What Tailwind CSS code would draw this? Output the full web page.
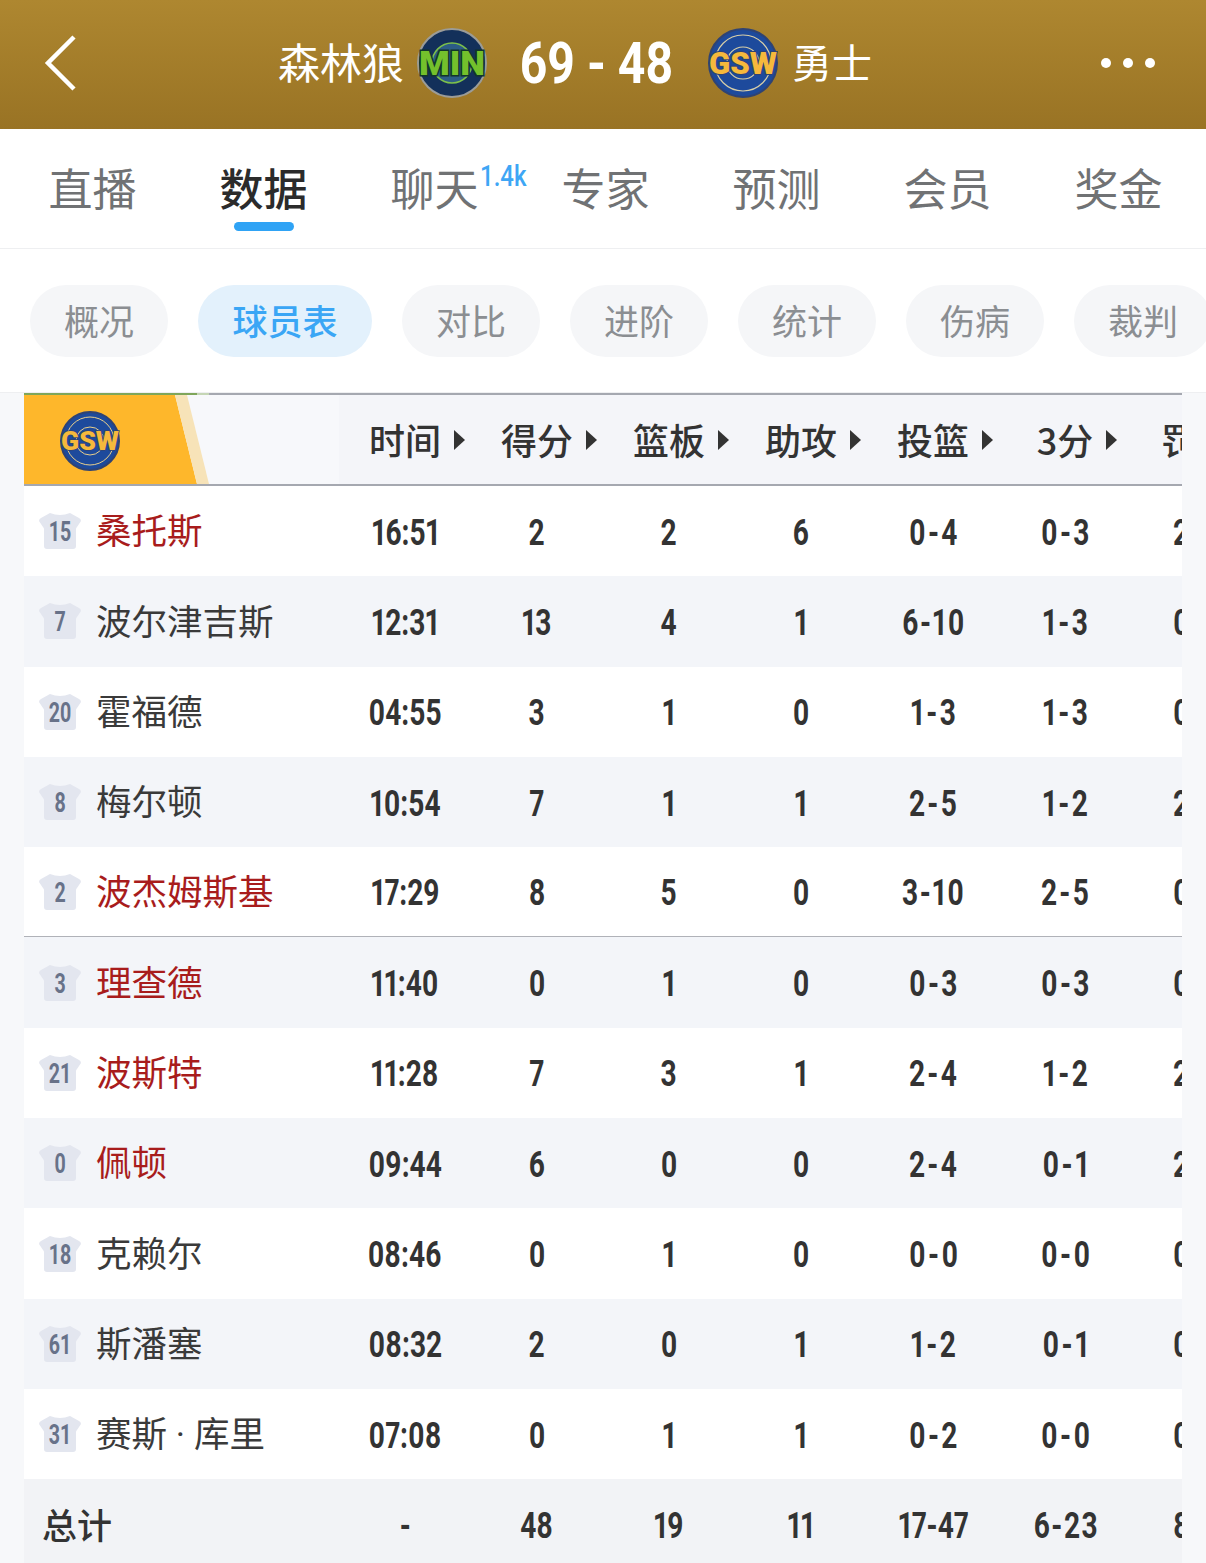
<!doctype html>
<html lang="zh-CN">
<head>
  <meta charset="UTF-8" />
  <meta name="viewport" content="width=device-width, initial-scale=1.0" />
  <title>森林狼 69 - 48 勇士</title>
  <script src="https://cdn.jsdelivr.net/npm/@tailwindcss/browser@4"></script>
</head>
<body class="w-[1206px] h-[1563px] overflow-hidden bg-[#f7f8fa] font-[family-name:'Noto_Sans_CJK_SC',sans-serif]">

  <!-- Score bar -->
  <header class="h-[129px] pb-[3px] flex items-center bg-gradient-to-b from-[#ae8730] to-[#997324] text-white">
    <svg class="ml-[44px] w-[32px] h-[56px]" viewBox="0 0 32 56" fill="none" stroke="#fff" stroke-width="4.5"><path d="M30 2 L4 28 L30 54" /></svg>
    <span class="ml-[202px] w-[124px] pb-[4px] text-[42px] leading-none whitespace-nowrap">森林狼</span>
    <svg class="ml-[15px] w-[70px] h-[70px] shrink-0" viewBox="0 0 70 70">
      <circle cx="35" cy="35" r="34" fill="#13305a" stroke="#9b9c98" stroke-width="2" />
      <circle cx="35" cy="35" r="20" fill="#2c5c86" stroke="#7cc04a" stroke-width="1.5" />
      <text x="35" y="47" text-anchor="middle" font-family="Roboto" font-weight="900" font-size="34" textLength="66" lengthAdjust="spacingAndGlyphs" fill="#74c02c" stroke="#12352c" stroke-width="3" class="[paint-order:stroke]">MIN</text>
    </svg>
    <div class="ml-[34px] w-[151px] flex justify-center">
      <span class="inline-block scale-x-[.83] whitespace-nowrap font-[family-name:Roboto,sans-serif] font-bold text-[58px] leading-none">69 - 48</span>
    </div>
    <svg class="ml-[36px] w-[70px] h-[70px] shrink-0" viewBox="0 0 70 70">
      <circle cx="35" cy="35" r="34" fill="#1d4a9c" stroke="#2f4373" stroke-width="2" />
      <circle cx="35" cy="35" r="28" fill="none" stroke="#d8cfa8" stroke-width="1.2" />
      <circle cx="35" cy="35" r="16" fill="none" stroke="#d8cfa8" stroke-width="1.2" />
      <text x="35" y="46" text-anchor="middle" font-family="Roboto" font-weight="900" font-size="31" textLength="68" lengthAdjust="spacingAndGlyphs" fill="#f5b93c" stroke="#2f4373" stroke-width="2" class="[paint-order:stroke]">GSW</text>
    </svg>
    <span class="ml-[14px] w-[81px] pb-[4px] text-[40px] leading-none whitespace-nowrap">勇士</span>
    <div class="ml-[228px] flex gap-[12px]">
      <span class="w-[10px] h-[10px] rounded-full bg-white"></span>
      <span class="w-[10px] h-[10px] rounded-full bg-white"></span>
      <span class="w-[10px] h-[10px] rounded-full bg-white"></span>
    </div>
  </header>

  <!-- Main tabs -->
  <nav class="h-[120px] pl-[7px] flex bg-white border-b border-[#eeeff1] text-[44px] text-[#707274]">
    <a class="w-[171px] pt-[26px] leading-[64px] text-center">直播</a>
    <a class="relative w-[171px] pt-[26px] leading-[64px] text-center font-medium text-[#2b2b2b]">数据<span class="absolute left-[56px] top-[93px] w-[60px] h-[9px] rounded-full bg-[#2fa3f5]"></span></a>
    <a class="relative w-[171px] pt-[26px] leading-[64px] text-center">聊天<span class="absolute left-[131px] top-[32px] text-[30px] leading-none text-[#3ea6f5] font-[family-name:Roboto,sans-serif] font-medium scale-x-[.8] origin-left whitespace-nowrap">1.4k</span></a>
    <a class="w-[171px] pt-[26px] leading-[64px] text-center">专家</a>
    <a class="w-[171px] pt-[26px] leading-[64px] text-center">预测</a>
    <a class="w-[171px] pt-[26px] leading-[64px] text-center">会员</a>
    <a class="w-[171px] pt-[26px] leading-[64px] text-center">奖金</a>
  </nav>

  <!-- Sub tabs -->
  <div class="h-[144px] pt-[36px] pl-[30px] flex gap-[30px] overflow-hidden bg-white border-b border-[#eeeff1] text-[35px] text-[#8b8e92]">
    <a class="w-[138px] h-[72px] shrink-0 rounded-full bg-[#f5f6f8] leading-[70px] text-center">概况</a>
    <a class="w-[174px] h-[72px] shrink-0 rounded-full bg-[#e3f1fc] leading-[70px] text-center font-medium text-[#3aa6f5]">球员表</a>
    <a class="w-[138px] h-[72px] shrink-0 rounded-full bg-[#f5f6f8] leading-[70px] text-center">对比</a>
    <a class="w-[138px] h-[72px] shrink-0 rounded-full bg-[#f5f6f8] leading-[70px] text-center">进阶</a>
    <a class="w-[138px] h-[72px] shrink-0 rounded-full bg-[#f5f6f8] leading-[70px] text-center">统计</a>
    <a class="w-[138px] h-[72px] shrink-0 rounded-full bg-[#f5f6f8] leading-[70px] text-center">伤病</a>
    <a class="w-[138px] h-[72px] shrink-0 rounded-full bg-[#f5f6f8] leading-[70px] text-center">裁判</a>
  </div>

  <!-- Box score -->
  <section class="ml-[24px] w-[1158px] overflow-hidden text-[#333]">
    <div class="relative h-[93px] grid grid-cols-[315px_repeat(7,132px)] items-center bg-[#f4f5f9] border-t-[2px] border-b-[2px] border-t-[#a5a8b0] border-b-[#a5a8b0] text-[36px] font-medium">
      <svg class="w-[315px] h-[89px] bg-[#f7f8fb]" viewBox="0 0 315 89">
        <polygon points="0,0 151,0 173,89 0,89" fill="#feb72b" />
        <polygon points="151,0 163,0 185,89 173,89" fill="#f7e3b8" />
        <g transform="translate(36,16)">
          <circle cx="30" cy="30" r="29" fill="#1d4a9c" stroke="#2f4373" stroke-width="2" />
          <circle cx="30" cy="30" r="24" fill="none" stroke="#e8cf8c" stroke-width="1" />
          <circle cx="30" cy="30" r="14" fill="none" stroke="#e8cf8c" stroke-width="1" />
          <text x="30" y="39" text-anchor="middle" font-family="Roboto" font-weight="900" font-size="26" textLength="58" lengthAdjust="spacingAndGlyphs" fill="#f5b93c" stroke="#2f4373" stroke-width="1.6" class="[paint-order:stroke]">GSW</text>
        </g>
      </svg>
      <div id="head-cells" class="contents"></div>
      <span class="absolute left-0 -top-[2px] w-[173px] h-[2px] bg-[#7fa65a]"></span>
      <span class="absolute left-[173px] -top-[2px] w-[12px] h-[2px] bg-[#c5d6b5]"></span>
    </div>
    <div id="rows"></div>
  </section>

  <script>
    const heads = ["时间", "得分", "篮板", "助攻", "投篮", "3分", "罚球"];
    const players = [
      ["15", "桑托斯", 1, "16:51", "2", "2", "6", "0-4", "0-3", "2-2"],
      ["7", "波尔津吉斯", 0, "12:31", "13", "4", "1", "6-10", "1-3", "0-0"],
      ["20", "霍福德", 0, "04:55", "3", "1", "0", "1-3", "1-3", "0-0"],
      ["8", "梅尔顿", 0, "10:54", "7", "1", "1", "2-5", "1-2", "2-2"],
      ["2", "波杰姆斯基", 1, "17:29", "8", "5", "0", "3-10", "2-5", "0-0"],
      ["3", "理查德", 1, "11:40", "0", "1", "0", "0-3", "0-3", "0-0"],
      ["21", "波斯特", 1, "11:28", "7", "3", "1", "2-4", "1-2", "2-2"],
      ["0", "佩顿", 1, "09:44", "6", "0", "0", "2-4", "0-1", "2-2"],
      ["18", "克赖尔", 0, "08:46", "0", "1", "0", "0-0", "0-0", "0-0"],
      ["61", "斯潘塞", 0, "08:32", "2", "0", "1", "1-2", "0-1", "0-0"],
      ["31", "赛斯 · 库里", 0, "07:08", "0", "1", "1", "0-2", "0-0", "0-0"],
    ];
    const totals = ["-", "48", "19", "11", "17-47", "6-23", "8-9"];

    // hyphens are wider in the reference's number font, short values need more room
    const spacingFor = (v) => {
      if (v.length < 3 || !v.includes("-")) return "";
      if (v.length === 3) return "ml-[3px] tracking-[3px]";
      if (v.length === 4) return "ml-[2px] tracking-[2px]";
      return "";
    };
    const num = (v) => `<div class="flex justify-center pt-[2px]"><span class="inline-block scale-x-[.76] whitespace-nowrap font-[family-name:Roboto,sans-serif] font-bold proportional-nums text-[37px] leading-none ${spacingFor(v)}">${v}</span></div>`;

    document.getElementById("head-cells").innerHTML = heads.map((h) =>
      `<div class="relative pb-[2px] text-center whitespace-nowrap">${h}<span class="absolute top-[18px] ml-[13px] w-0 h-0 border-y-[10px] border-y-transparent border-l-[11px] border-l-[#333]"></span></div>`
    ).join("");

    let html = players.map((p, i) => {
      const bg = i % 2 ? "bg-[#f3f5f9]" : "bg-white";
      const line = i === 4 ? "border-b-[1px] border-b-[#b0b2b8]" : "";
      const color = p[2] ? "text-[#a81c1c]" : "text-[#3a3a3a]";
      return `<div class="h-[90.3px] grid grid-cols-[315px_repeat(7,132px)] items-center ${bg} ${line}">
        <div class="flex items-center pl-[15px]">
          <div class="relative w-[42px] h-[36px] shrink-0">
            <svg class="w-[42px] h-[36px]" viewBox="0 0 42 36"><path d="M11 0 Q21 4 31 0 L40 5 Q42 6 42 8 L38 14 Q37 15 37 16 L37 33 Q37 36 34 36 L8 36 Q5 36 5 33 L5 16 Q5 15 4 14 L0 8 Q0 6 2 5 Z" fill="#e3e6ef" /></svg>
            <div class="absolute inset-0 pt-[2px] flex items-center justify-center"><span class="inline-block scale-x-[.7] font-[family-name:Roboto,sans-serif] font-bold text-[28px] leading-none text-[#687289]">${p[0]}</span></div>
          </div>
          <span class="ml-[15px] pt-[4px] text-[35.5px] leading-none whitespace-nowrap font-[family-name:Roboto,'Noto_Sans_CJK_SC',sans-serif] ${color}">${p[1]}</span>
        </div>
        ${p.slice(3).map(num).join("")}
      </div>`;
    }).join("");

    html += `<div class="h-[90px] grid grid-cols-[315px_repeat(7,132px)] items-center bg-[#f2f3f6]">
      <span class="pl-[18px] pb-[2px] text-[35px] font-medium leading-none text-[#333]">总计</span>
      ${totals.map(num).join("")}
    </div>`;
    document.getElementById("rows").innerHTML = html;
  </script>
</body>
</html>
